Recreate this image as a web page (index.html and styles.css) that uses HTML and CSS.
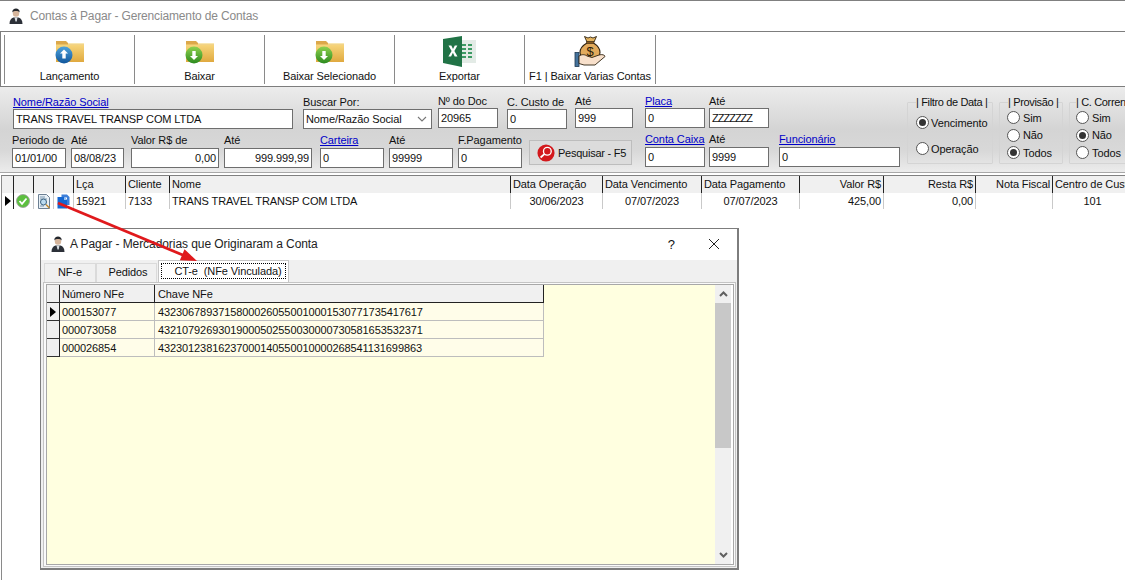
FILE: index.html
```html
<!DOCTYPE html>
<html lang="pt">
<head>
<meta charset="utf-8">
<title>Contas à Pagar</title>
<link rel="stylesheet" href="styles.css">
</head>
<body>
<svg class="defs" width="0" height="0" aria-hidden="true">
  <defs>
    <linearGradient id="gold" x1="0" y1="0" x2="0" y2="1"><stop offset="0" stop-color="#f7d67c"/><stop offset="1" stop-color="#e0a93f"/></linearGradient>
    <linearGradient id="blueball" x1="0" y1="0" x2="0" y2="1"><stop offset="0" stop-color="#4fa3dc"/><stop offset="1" stop-color="#10569c"/></linearGradient>
    <linearGradient id="greenball" x1="0" y1="0" x2="0" y2="1"><stop offset="0" stop-color="#8fd24f"/><stop offset="1" stop-color="#2c8a1e"/></linearGradient>
    <symbol id="person" viewBox="0 0 14 16">
      <path d="M0.5 16c0-3.500 1.500-6 4-6.500h5c2.500 0.500 4 3 4 6.500z" fill="#2c3038"/>
      <path d="M5.500 9.500h3L7.700 13.500h-1.200z" fill="#d8dde2"/>
      <circle cx="7" cy="5.500" r="3.200" fill="#d5b59c"/>
      <path d="M3.300 4.500C3.300 1.500 5 0.500 7 0.500s3.700 1 3.700 4c-1-1.200-2.200-1.600-3.700-1.600s-2.700 0.400-3.700 1.600z" fill="#23262c"/>
    </symbol>
    <symbol id="folder" viewBox="0 0 30 23">
      <path d="M1 1h10l2 2h16v19H1z" fill="#dca84a"/>
      <path d="M1 4.500h28V22H1z" fill="url(#gold)"/>
      <path d="M13 3h16v1.500H13z" fill="#f9e7b0"/>
    </symbol>
  </defs>
</svg>

<div class="titlebar">
  <svg class="title-icon" width="14" height="16"><use href="#person"/></svg>
  <span class="title-text">Contas à Pagar - Gerenciamento de Contas</span>
</div>

<div class="toolbar">
  <div class="tool">
    <svg class="tool-icon" width="32" height="24" viewBox="0 0 32 24"><use href="#folder" x="1" y="0" width="30" height="23"/><circle cx="10" cy="15" r="8.500" fill="url(#blueball)"/><path d="M10 9.500l4 4h-2.300v5h-3.400v-5H6z" fill="#fff"/></svg>
    <span>Lançamento</span>
  </div>
  <div class="tool">
    <svg class="tool-icon" width="32" height="24" viewBox="0 0 32 24"><use href="#folder" x="1" y="0" width="30" height="23"/><circle cx="10" cy="15" r="8.500" fill="url(#greenball)"/><path d="M10 20l-4-4h2.300v-5h3.400v5H14z" fill="#fff"/></svg>
    <span>Baixar</span>
  </div>
  <div class="tool">
    <svg class="tool-icon" width="32" height="24" viewBox="0 0 32 24"><use href="#folder" x="1" y="0" width="30" height="23"/><circle cx="10" cy="15" r="8.500" fill="url(#greenball)"/><path d="M10 20l-4-4h2.300v-5h3.400v5H14z" fill="#fff"/></svg>
    <span>Baixar Selecionado</span>
  </div>
  <div class="tool tool-excel">
    <svg class="excel" width="33" height="31" viewBox="0 0 33 31">
      <rect x="14" y="4" width="19" height="23" fill="#e3ebe6"/>
      <path d="M19 8h4v2h-4zM25 8h4v2h-4zM19 12h4v2h-4zM25 12h4v2h-4zM19 16h4v2h-4zM25 16h4v2h-4zM19 20h4v2h-4zM25 20h4v2h-4z" fill="#3d9a63"/>
      <path d="M0 3L19 0v31L0 27z" fill="#217346"/>
      <path d="M5.500 9.500h2.800l1.700 3.500 1.800-3.500h2.600l-3 5.400 3.100 5.600h-2.800l-1.800-3.700-1.800 3.700H5.400l3.200-5.600z" fill="#fff"/>
    </svg>
    <span>Exportar</span>
  </div>
  <div class="tool tool-bag">
    <svg class="bag" width="33" height="33" viewBox="0 0 33 33">
      <path d="M10.500 1.500l3.500 1.500 2.500-1 2.500 1 3.500-1.500-2.500 5.500h-7z" fill="#e5b45f" stroke="#2e2110" stroke-width="0.900"/>
      <path d="M13 8C8.500 10.500 6 14 6 17.500 6 22 10 24.500 16 24.500S26 22 26 17.500C26 14 23.500 10.500 19.500 8z" fill="#e2aa5c" stroke="#2e2110" stroke-width="1.100"/>
      <path d="M12.500 6.500h7.500v1.800h-7.500z" fill="#8d5e22" stroke="#2e2110" stroke-width="0.500"/>
      <text x="16" y="20.500" class="bag-dollar">$</text>
      <rect x="1" y="17.500" width="4" height="14" fill="#44729b" stroke="#1f3850" stroke-width="0.800"/>
      <path d="M5 21c3-2 6-1.500 8 0l5 1.500 7-2.500c3-1 6 0 6 1.500L21 30H10l-5-1.500z" fill="#f8e0cb" stroke="#2e2110" stroke-width="0.900"/>
    </svg>
    <span>F1 | Baixar Varias Contas</span>
  </div>
</div>

<div class="filters">
  <div class="filter-rows">
    <div class="frow frow-a">
      <div class="field f-nome"><a class="lab link">Nome/Razão Social</a><div class="box">TRANS TRAVEL TRANSP COM LTDA</div></div>
      <div class="field f-busca"><span class="lab">Buscar Por:</span><div class="box select">Nome/Razão Social<svg width="10" height="6" viewBox="0 0 10 6"><path d="M1 1l4 4 4-4" fill="none" stroke="#777" stroke-width="1.100"/></svg></div></div>
      <div class="field f-doc up"><span class="lab">Nº do Doc</span><div class="box">20965</div></div>
      <div class="field f-custo"><span class="lab">C. Custo de</span><div class="box">0</div></div>
      <div class="field f-custo2 up"><span class="lab">Até</span><div class="box">999</div></div>
      <div class="field f-placa up"><a class="lab link">Placa</a><div class="box">0</div></div>
      <div class="field f-placa2 up"><span class="lab">Até</span><div class="box zz">ZZZZZZZ</div></div>
    </div>
    <div class="frow frow-b">
      <div class="field f-per"><span class="lab">Periodo de</span><div class="box">01/01/00</div></div>
      <div class="field f-per2"><span class="lab">Até</span><div class="box">08/08/23</div></div>
      <div class="field f-val"><span class="lab">Valor R$ de</span><div class="box right">0,00</div></div>
      <div class="field f-val2"><span class="lab">Até</span><div class="box right">999.999,99</div></div>
      <div class="field f-cart"><a class="lab link">Carteira</a><div class="box">0</div></div>
      <div class="field f-cart2"><span class="lab">Até</span><div class="box">99999</div></div>
      <div class="field f-pag"><span class="lab">F.Pagamento</span><div class="box">0</div></div>
      <div class="search">
        <svg width="18" height="18" viewBox="0 0 20 20"><circle cx="10" cy="10" r="9.500" fill="#d3181c"/><circle cx="11.500" cy="8" r="4.300" fill="none" stroke="#fff" stroke-width="1.500"/><path d="M8.500 11l-4.500 4" stroke="#fff" stroke-width="2"/></svg>
        <span>Pesquisar - F5</span>
      </div>
      <div class="field f-conta up"><a class="lab link">Conta Caixa</a><div class="box">0</div></div>
      <div class="field f-conta2 up"><span class="lab">Até</span><div class="box">9999</div></div>
      <div class="field f-func up"><a class="lab link">Funcionário</a><div class="box">0</div></div>
    </div>
  </div>
  <fieldset class="group g-data">
    <legend>| Filtro de Data |</legend>
    <div class="radio"><i class="dot on"></i>Vencimento</div>
    <div class="radio"><i class="dot"></i>Operação</div>
  </fieldset>
  <fieldset class="group g-prov">
    <legend>| Provisão |</legend>
    <div class="radio"><i class="dot"></i>Sim</div>
    <div class="radio"><i class="dot"></i>Não</div>
    <div class="radio"><i class="dot on"></i>Todos</div>
  </fieldset>
  <fieldset class="group g-cc">
    <legend>| C. Corrente |</legend>
    <div class="radio"><i class="dot"></i>Sim</div>
    <div class="radio"><i class="dot on"></i>Não</div>
    <div class="radio"><i class="dot"></i>Todos</div>
  </fieldset>
</div>

<div class="main-grid">
  <div class="mg-row mg-head">
    <div class="c"></div><div class="c"></div><div class="c"></div><div class="c"></div>
    <div class="c">Lça</div><div class="c">Cliente</div><div class="c">Nome</div>
    <div class="c">Data Operação</div><div class="c">Data Vencimento</div><div class="c">Data Pagamento</div>
    <div class="c r">Valor R$</div><div class="c r">Resta R$</div><div class="c r">Nota Fiscal</div><div class="c">Centro de Custo</div>
  </div>
  <div class="mg-row mg-body">
    <div class="c ind"><i class="tri"></i></div>
    <div class="c ico ico-check"><svg width="14" height="14" viewBox="0 0 14 14"><circle cx="7" cy="7" r="6.500" fill="#5cbf3f" stroke="#9a9a9a" stroke-width="0.800"/><path d="M3.500 7l2.500 2.800L10.500 4.500" fill="none" stroke="#fff" stroke-width="1.800"/></svg></div>
    <div class="c ico"><svg width="14" height="15" viewBox="0 0 14 15"><path d="M1.500 0.500h8l3 3v11h-11z" fill="#e8f0f6" stroke="#6c7f92"/><path d="M3 3h5M3 5h7M3 12h4" stroke="#7c98b0"/><circle cx="6.500" cy="8" r="3" fill="#bcdcf0" stroke="#38607f"/><path d="M9 10.500l3.500 3.500" stroke="#c08a30" stroke-width="1.500"/></svg></div>
    <div class="c ico"><svg width="13" height="15" viewBox="0 0 13 15"><path d="M4.500 0.500h5.500l2.500 2.500v8H10V3.500H4.500z" fill="#3d7fd9"/><path d="M0.500 3h6.500l3 3v8.500H0.500z" fill="#1467d2"/><path d="M7 3v3h3" fill="#9cc4f2"/></svg></div>
    <div class="c">15921</div><div class="c">7133</div><div class="c">TRANS TRAVEL TRANSP COM LTDA</div>
    <div class="c ctr">30/06/2023</div><div class="c ctr">07/07/2023</div><div class="c ctr">07/07/2023</div>
    <div class="c r">425,00</div><div class="c r">0,00</div><div class="c r"></div><div class="c ctr">101</div>
  </div>
</div>

<div class="dialog">
  <div class="dlg-title">
    <svg class="dlg-icon" width="14" height="16"><use href="#person"/></svg>
    <span class="dlg-text">A Pagar - Mercadorias que Originaram a Conta</span>
    <span class="dlg-help">?</span>
    <svg class="dlg-close" width="12" height="12" viewBox="0 0 12 12"><path d="M1 1l10 10M11 1L1 11" stroke="#222" stroke-width="1"/></svg>
  </div>
  <div class="tabs">
    <div class="tab t1">NF-e</div>
    <div class="tab t2">Pedidos</div>
    <div class="tab t3 active"><span class="focus">CT-e &nbsp;(NFe Vinculada)</span></div>
  </div>
  <div class="page">
    <div class="dg">
      <div class="dg-table">
        <div class="dg-row dg-head"><div class="dg-ind"></div><div class="dg-c">Número NFe</div><div class="dg-c">Chave NFe</div></div>
        <div class="dg-row"><div class="dg-ind"><i class="tri"></i></div><div class="dg-c">000153077</div><div class="dg-c">43230678937158000260550010001530771735417617</div></div>
        <div class="dg-row"><div class="dg-ind"></div><div class="dg-c">000073058</div><div class="dg-c">43210792693019000502550030000730581653532371</div></div>
        <div class="dg-row"><div class="dg-ind"></div><div class="dg-c">000026854</div><div class="dg-c">43230123816237000140550010000268541131699863</div></div>
      </div>
      <div class="scroll">
        <svg class="chev" width="9" height="6" viewBox="0 0 9 6"><path d="M1 5l3.500-3.500L8 5" fill="none" stroke="#606060" stroke-width="2"/></svg>
        <div class="thumb"></div>
        <div class="track"></div>
        <svg class="chev" width="9" height="6" viewBox="0 0 9 6"><path d="M1 1l3.500 3.500L8 1" fill="none" stroke="#606060" stroke-width="2"/></svg>
      </div>
    </div>
  </div>
</div>

<svg class="arrow" width="170" height="75" viewBox="0 0 170 75" aria-hidden="true">
  <path d="M4 4L130 56.500" stroke="#e0191c" stroke-width="2.800"/>
  <path d="M143 62L125.900 61.300 130.500 50.300z" fill="#e0191c"/>
</svg>
</body>
</html>
```

FILE: styles.css
```css
* { box-sizing: border-box; }
html, body { margin: 0; padding: 0; }
body {
  position: relative;
  width: 1125px;
  height: 581px;
  overflow: hidden;
  background: #fff;
  font-family: "Liberation Sans", Arial, sans-serif;
  font-size: 11px;
  letter-spacing: -0.1px;
  color: #111;
}
.defs { position: absolute; }

.titlebar {
  height: 31px;
  border-top: 1px solid #808080;
  display: flex;
  align-items: center;
  padding-left: 9px;
}
.title-icon { margin-right: 7px; }
.title-text { font-size: 12px; color: #8a8a8a; letter-spacing: -0.15px; }

.toolbar {
  height: 56px;
  border-top: 1px solid #7d7d7d;
  border-bottom: 1px solid #7d7d7d;
  border-left: 1px solid #7d7d7d;
  display: flex;
  padding: 3px 0 2px 3px;
}
.tool {
  width: 130px;
  border-left: 1px solid #8a8a8a;
  display: flex;
  flex-direction: column;
  align-items: center;
  justify-content: space-between;
  padding: 4px 0 2px;
}
.tool-bag { width: 132px; border-right: 1px solid #8a8a8a; padding-top: 0; }
.tool-excel { padding-top: 1px; }
.tool-icon { margin-top: 1px; }
.bag-dollar { font-size: 13px; font-family: "Liberation Sans", sans-serif; text-anchor: middle; fill: #2a1a08; }

.filters {
  height: 86px;
  background: linear-gradient(#ececec 0, #d4d4d4 50%, #d8d8d8 75%, #ececec 100%);
  border-bottom: 1px solid #a8a8a8;
  display: flex;
  align-items: flex-start;
}
.filter-rows { width: 907px; flex: none; padding-top: 8px; }
.frow { display: flex; align-items: flex-start; }
.frow-a { padding-left: 13px; }
.frow-a .lab { line-height: 15px; }
.frow-b { padding-left: 12px; margin-top: 5px; }
.field { display: flex; flex-direction: column; flex: none; }
.up { margin-top: -1px; }
.lab { height: 14px; line-height: 13px; white-space: nowrap; }
.link { color: #0000c8; text-decoration: underline; }
.box {
  height: 20px;
  line-height: 18px;
  background: #fff;
  border: 1px solid #6e6e6e;
  padding: 0 2px;
  white-space: nowrap;
  overflow: hidden;
}
.zz { letter-spacing: -1px; }
.right { text-align: right; }
.select { display: flex; align-items: center; justify-content: space-between; padding-right: 4px; }
.f-nome { width: 280px; margin-right: 10px; }
.f-busca { width: 129px; margin-right: 6px; }
.f-doc { width: 60px; margin-right: 9px; }
.f-custo { width: 60px; margin-right: 8px; }
.f-custo2 { width: 58px; margin-right: 12px; }
.f-placa { width: 60px; margin-right: 4px; }
.f-placa2 { width: 60px; }
.f-per { width: 54px; margin-right: 5px; }
.f-per2 { width: 53px; margin-right: 7px; }
.f-val { width: 88px; margin-right: 5px; }
.f-val2 { width: 88px; margin-right: 8px; }
.f-cart { width: 64px; margin-right: 5px; }
.f-cart2 { width: 64px; margin-right: 5px; }
.f-pag { width: 64px; margin-right: 7px; }
.f-conta { width: 60px; margin-right: 4px; }
.f-conta2 { width: 60px; margin-right: 10px; }
.f-func { width: 121px; }
.search {
  width: 103px;
  height: 25px;
  margin: 6px 13px 0 0;
  flex: none;
  border: 1px solid #bdbdbd;
  background: #dcdcdc;
  display: flex;
  align-items: center;
  gap: 3px;
  padding-left: 7px;
  letter-spacing: -0.25px;
  white-space: nowrap;
}

.group {
  flex: none;
  margin: 9px 6px 0 0;
  padding: 0 0 0 8px;
  height: 68px;
  border: 1px solid #d4d4d4;
  border-radius: 1px;
  display: flex;
  flex-direction: column;
  white-space: nowrap;
}
.group legend { padding: 0; margin-left: 0; line-height: 13px; letter-spacing: -0.35px; }
.g-data { width: 86px; gap: 13px; padding-top: 7px; }
.g-prov { width: 64px; padding-left: 7px; }
.g-prov legend { margin-left: 1px; }
.g-cc { width: 80px; padding-left: 6px; margin-right: 0; }
.radio { display: flex; align-items: center; height: 17.500px; }
.g-data .radio { height: 13px; }
.dot {
  width: 13px;
  height: 13px;
  border-radius: 50%;
  background: #fff;
  border: 1px solid #555;
  margin-right: 3px;
  position: relative;
  flex: none;
}
.g-data .dot { margin-right: 2px; }
.dot.on::after {
  content: "";
  position: absolute;
  inset: 2px;
  border-radius: 50%;
  background: #333;
}

.main-grid { height: 405px; margin: 2px 0 0 1px; border-top: 1px solid #808080; border-left: 1px solid #8a8a8a; }
.mg-row {
  display: grid;
  grid-template-columns: 12px 20px 20px 20px 52px 44px 341px 92px 99px 98px 84px 92px 77px 80px;
}
.mg-head { height: 17px; background: #f0f0f0; }
.mg-head .c { border-right: 1px solid #222; }
.mg-body { height: 16px; background: #fff; }
.mg-body .c { border-right: 1px solid #c9c9c9; }
.c { padding: 0 2px; line-height: 17px; white-space: nowrap; overflow: hidden; }
.c:first-child { padding: 0; }
.r { text-align: right; }
.ctr { text-align: center; }
.ico { padding: 1px 0 0 3px; line-height: 0; }
.ico-check { padding-left: 2px; }
.ind { display: flex; align-items: center; justify-content: center; }
.mg-body .ind { border-right-color: #222; }
.tri {
  width: 0;
  height: 0;
  border-left: 6px solid #000;
  border-top: 5.500px solid transparent;
  border-bottom: 5.500px solid transparent;
  display: block;
}

.dialog {
  position: absolute;
  left: 40px;
  top: 228px;
  width: 699px;
  height: 342px;
  background: #f0f0f0;
  border: 1px solid #7d7d7d;
  border-right-width: 2px;
  border-bottom-width: 2px;
}
.dlg-title {
  height: 31px;
  background: #fff;
  display: flex;
  align-items: center;
  padding: 0 0 1px 10px;
}
.dlg-icon { margin-right: 5px; }
.dlg-text { font-size: 12px; color: #222; flex: 1; letter-spacing: -0.07px; }
.dlg-help { font-size: 13px; margin-right: 33px; }
.dlg-close { margin-right: 17px; }
.tabs { height: 22px; display: flex; align-items: flex-end; padding-left: 3px; }
.tab {
  height: 19px;
  border: 1px solid #dadada;
  border-bottom: 0;
  background: #f0f0f0;
  text-align: center;
  line-height: 17px;
}
.t1 { width: 52px; }
.t2 { width: 61px; padding-left: 3px; }
.t3 { width: 131px; height: 22px; margin-left: 1px; background: #fff; border-color: #c6c6c6; padding: 2px 2px 0; line-height: 14px; }
.focus { display: block; border: 1px dotted #000; height: 16px; padding-left: 9px; white-space: nowrap; }
.page { height: 285px; margin: 0 1px 0 2px; border: 1px solid #c4c4c4; padding: 1px 1px 1px 2px; background: #fafafa; }
.dg { display: flex; height: 281px; background: #ffffe0; justify-content: space-between; border: 1px solid #a8a8a8; }
.dg-table { width: 497px; }
.dg-row { display: grid; grid-template-columns: 13px 95px 389px; height: 18px; background: #fffde9; border-bottom: 1px solid #bdbdbd; }
.dg-c { border-right: 1px solid #bdbdbd; padding-left: 2px; line-height: 18px; white-space: nowrap; overflow: hidden; }
.dg-c:last-child { padding-left: 3px; }
.dg-ind { background: #f0f0f0; border-right: 1px solid #222; border-bottom: 1px solid #333; margin-bottom: -1px; display: flex; align-items: center; padding-left: 3px; }
.dg-head { background: #f0f0f0; border-bottom: 1px solid #222; }
.dg-head .dg-c { border-right-color: #222; }
.scroll { width: 18px; background: #f0f0f0; border-right: 2px solid #fff; display: flex; flex-direction: column; align-items: center; }
.chev { margin: 6px 0; flex: none; }
.thumb { width: 16px; height: 145px; background: #c8c8c8; flex: none; }
.track { flex: 1; }

.arrow { position: absolute; left: 54px; top: 199px; pointer-events: none; }
```
